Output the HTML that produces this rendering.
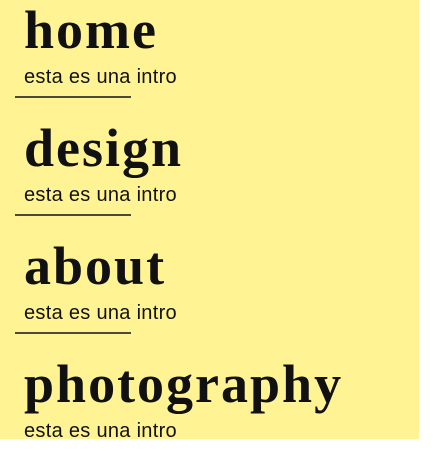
<!DOCTYPE html>
<html><head><style>
html,body{margin:0;padding:0;width:436px;height:439px;overflow:hidden;background:#fff;}
.bg{position:absolute;left:0;top:0;width:419px;height:439px;background:#fff394;}
.b{position:absolute;left:0;width:419px;height:118px;}
.h{position:absolute;left:24px;top:3px;font:bold 54px/54px "Liberation Serif",serif;letter-spacing:2px;color:#111;white-space:nowrap;}
.i{position:absolute;left:24px;top:67px;font:20px/20px "Liberation Sans",sans-serif;letter-spacing:0.3px;color:#111;white-space:nowrap;}
.l{position:absolute;left:15px;top:96px;width:116px;height:2px;background:#4a4a3a;}
</style></head><body>
<div class="bg"></div>
<div class="b" style="top:0"><div class="h">home</div><div class="i">esta es una intro</div><div class="l"></div></div>
<div class="b" style="top:118px"><div class="h">design</div><div class="i">esta es una intro</div><div class="l"></div></div>
<div class="b" style="top:236px"><div class="h">about</div><div class="i">esta es una intro</div><div class="l"></div></div>
<div class="b" style="top:354px"><div class="h">photography</div><div class="i">esta es una intro</div></div>
</body></html>
